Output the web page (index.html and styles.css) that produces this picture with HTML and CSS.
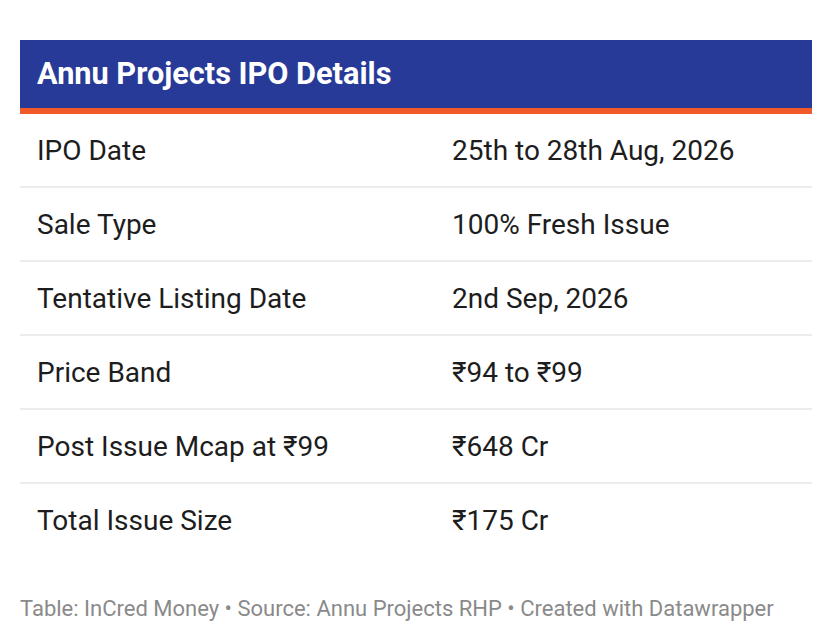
FILE: index.html
```html
<!DOCTYPE html>
<html>
<head>
<meta charset="utf-8">
<link rel="stylesheet" href="styles.css">
</head>
<body>
<div class="wrap">
  <div class="title">Annu Projects IPO Details</div>
  <div class="table">
    <div class="row"><div class="cell">IPO Date</div><div class="cell">25th to 28th Aug, 2026</div></div>
    <div class="row"><div class="cell">Sale Type</div><div class="cell">100% Fresh Issue</div></div>
    <div class="row"><div class="cell">Tentative Listing Date</div><div class="cell">2nd Sep, 2026</div></div>
    <div class="row"><div class="cell">Price Band</div><div class="cell">₹94 to ₹99</div></div>
    <div class="row"><div class="cell">Post Issue Mcap at ₹99</div><div class="cell">₹648 Cr</div></div>
    <div class="row last"><div class="cell">Total Issue Size</div><div class="cell">₹175 Cr</div></div>
  </div>
  <div class="footer">Table: InCred Money • Source: Annu Projects RHP • Created with Datawrapper</div>
</div>
</body>
</html>
```
FILE: styles.css
```css
html, body {
  margin: 0;
  padding: 0;
  background: #ffffff;
}
body {
  font-family: Roboto, "Liberation Sans", sans-serif;
  color: #1d1d1d;
}
.wrap {
  padding: 40px 20px 0 20px;
}
.title {
  background: #283a97;
  color: #ffffff;
  font-weight: 700;
  font-size: 30.7px;
  height: 68px;
  line-height: 68px;
  padding-left: 17px;
  border-bottom: 6px solid #f05a28;
}
.row {
  display: grid;
  grid-template-columns: 415px 1fr;
  height: 72px;
  align-items: center;
  border-bottom: 2px solid #ececec;
  font-size: 28px;
}
.row.last {
  border-bottom: none;
}
.cell {
  padding-left: 17px;
}
.footer {
  margin-top: 40px;
  font-size: 22px;
  color: #8a8a8a;
}
```
